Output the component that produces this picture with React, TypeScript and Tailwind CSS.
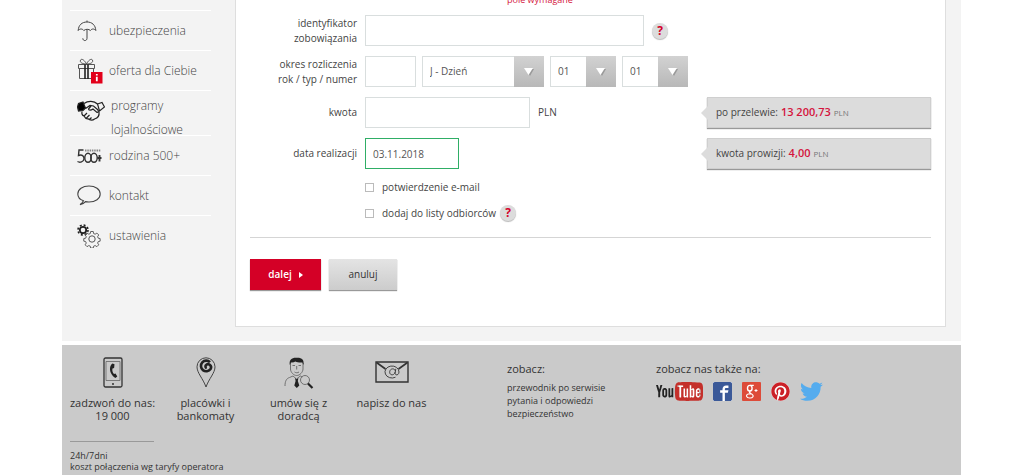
import React from "react";
import type { ReactNode } from "react";
import { FaPinterest, FaTwitter } from "react-icons/fa";
import { ImFacebook2, ImYoutube2 } from "react-icons/im";

const UmbrellaIcon = () => (
  <svg width="20" height="22" viewBox="0 0 20 22" fill="none" stroke="#444" strokeWidth="1">
    <path d="M1.2 10.5C1.5 5 5 2 10 2s8.500 3 8.800 8.500c-1.500-2-4-2-5.400 0-1.500-1.600-4.900-1.600-6.600 0-1.500-2-4.100-2-5.600 0z" />
    <path d="M10 .5V2M10 9.500v8.800c0 3-4.200 3-4.200 0" />
  </svg>
);

const GiftIcon = () => (
  <svg width="26" height="26" viewBox="0 0 26 26" fill="none" stroke="#555">
    <path d="M1.500 6.500h16v4h-16zM2.500 10.500h14v10h-14z" />
    <path d="M8 6v15M11 6v15" stroke="#222" strokeWidth="1.600" />
    <path d="M9.500 6C7 1 3.500 0 3.300 3c0 2 3 3 6.200 3C12 1 15.500 0 15.700 3c0 2-3 3-6.200 3z" />
    <path d="M14 14h11.500v11.500H14z" fill="#e2001a" stroke="none" />
    <path d="M19.800 16v1.600M19.800 18.800v4.400" stroke="#fff" strokeWidth="1.800" />
  </svg>
);

const HandsIcon = () => (
  <svg width="28" height="22" viewBox="0 0 28 22" fill="none" stroke="#222" strokeWidth="1.200">
    <path d="M.5 7 1.500 3.500 6 2l2.500 6L6 10.500l-4.500.5z" fill="#000" />
    <path d="m20.500 4 4.500-1.500L27.500 7 22.500 11z" />
    <path d="M7 3.500C11 .5 17 .5 20.500 4M8.500 8.500 13 5.500l3.500.5 4 3.500c1.500 1.500 1 3-.5 3l-4-3.500c-2 1.500-4.500 1.500-4.500 0L14 6" />
    <path d="M5 11.500c-.5 2.500.5 4 2 4.500 1 2 2.500 3 4 2.800 2 1.700 5 1.500 6.500.2 3-.8 5-3.500 4.500-7M7 16l3-3M9.500 18l3-3M12.500 19.500l2-2" />
  </svg>
);

const FamilyIcon = () => (
  <svg width="25" height="16" viewBox="0 0 25 16" fill="none" stroke="#333" strokeWidth="1.400">
    <path d="M6.500 2H2l-.5 5.500C5 6 7.300 8 7 11c-.5 3-4 4-6.500 2.500" />
    <ellipse cx="11" cy="9.800" rx="3.200" ry="4.500" />
    <ellipse cx="17" cy="9.800" rx="3.200" ry="4.500" />
    <path d="M20.500 10h4M22.500 7v6.500" strokeWidth="1.900" />
    <path d="M8 2.500h16" stroke="#888" strokeWidth="2" strokeDasharray="1.500 .8" />
  </svg>
);

const BubbleIcon = () => (
  <svg width="24" height="21" viewBox="0 0 24 21" fill="none" stroke="#444" strokeWidth="1.100">
    <path d="M6.500 15.800C2.800 14.600.8 12 .8 9c0-4.600 4.700-8 11.200-8s11.200 3.400 11.200 8-4.700 8-11.200 8c-1.200 0-2.400-.1-3.500-.4-1.300 1.600-3 2.600-5.500 3 1.700-1 2.700-2.200 3.500-3.800z" />
  </svg>
);

const GearsIcon = () => (
  <svg width="24" height="24" viewBox="0 0 24 24" fill="none" stroke="#555">
    <circle cx="6" cy="6" r="3.200" stroke="#222" strokeWidth="1.800" />
    <circle cx="6" cy="6" r="5" stroke="#222" strokeWidth="1.600" strokeDasharray="2 1.930" />
    <circle cx="15" cy="15" r="3.200" />
    <path d="m13.600 7 2.800 0 .4 2.200 1.600.7 1.900-1.200 2 2-1.200 1.900.7 1.600 2 .4v2.800l-2 .4-.7 1.600 1.200 1.900-2 2-1.900-1.200-1.600.7-.4 2h-2.800l-.4-2-1.600-.7-1.900 1.200-2-2 1.200-1.900-.7-1.600-2-.4v-2.800l2-.4.700-1.600-1.200-1.900 2-2 1.900 1.200 1.600-.7z" transform="translate(1 1) scale(.93)" />
  </svg>
);

const PhoneIcon = () => (
  <svg width="20" height="31" viewBox="0 0 20 31" fill="none" stroke="#333">
    <rect x="1" y="1" width="18" height="29" rx="1.500" strokeWidth="1.300" />
    <path d="M3 4.500h14v19H3z" stroke="#666" strokeWidth=".8" />
    <path d="M9.500 6.500c-3.500 2-4 10 2.800 14.500l2-1.500-1.800-3-1.500.6c-1.600-1.800-2-3.800-1.500-5.600l1.600-.5.400-3.700z" fill="#222" stroke="none" />
    <circle cx="10" cy="27" r=".9" fill="#222" stroke="none" />
  </svg>
);

const PinIcon = () => (
  <svg width="20" height="31" viewBox="0 0 20 31" fill="none" stroke="#444">
    <path d="M10 30C7 21.500 1 16 1 9.800a9 9 0 0 1 18 0C19 16 13 21.500 10 30z" />
    <path d="M14 5.200A5.300 5.300 0 1 0 14.600 12C16.500 8.500 12 5.500 9.800 8.200c-.8 1.300-.2 2.500 1 2.800" stroke="#222" strokeWidth="2.600" />
  </svg>
);

const AdvisorIcon = () => (
  <svg width="30" height="32" viewBox="0 0 30 32" fill="none" stroke="#666" strokeWidth=".9">
    <path d="M6.500 6v6c0 3 3 6.500 6.200 6.500S19 15 19 12V6" />
    <path d="M5.800 8C4.800 3 8 .5 12.500.8 18 .5 20.300 3 19.500 8l-1.200-2.500c-3 .3-5-.2-7-1-1 .8-2.500 1.200-4.300 1z" fill="#222" stroke="none" />
    <path d="M8.500 8.500H11M14.500 8.500H17M12.700 9v3.500M10.500 15c1.500 1 3 1 4.500 0M1 29c0-5 1.500-7.500 4.500-8.500L9 19l3.500 3 3.800-3 2 1" />
    <path d="m11 21 1.600 1.200L14.400 21l-.6 3 1.500 4.500-2.500 2.500-2.500-2.500L11.600 24z" fill="#222" stroke="none" />
    <circle cx="21" cy="23" r="4.500" />
    <path d="m24 26.500 4.500 4.500" stroke="#222" strokeWidth="2.200" />
  </svg>
);

const MailIcon = () => (
  <svg width="34" height="22" viewBox="0 0 34 22" fill="none" stroke="#333" strokeWidth="1.400">
    <path d="M1 1h32v20H1z" />
    <path d="m1.500 1.500 9 6.500M32.500 1.500l-9 6.500" strokeWidth="1.700" />
    <path d="M20.500 16.200A7 6 0 1 1 24 11c-.2 3.800-4.400 3.800-3.800.5l.6-3.700M20.200 11c-1 4-5.800 3.600-5.500-.2.400-3.600 5-4 5.700-.6" strokeWidth=".9" />
  </svg>
);

const GooglePlusIcon = () => (
  <svg width="19" height="19" viewBox="0 0 19 19" fill="none" stroke="#fff">
    <rect width="19" height="19" rx="1" fill="#dd4b39" stroke="none" />
    <ellipse cx="7.800" cy="6.200" rx="2.300" ry="2.800" strokeWidth="1.400" />
    <path d="M8 3.400h3.800M8.500 9c-2 1-1 1.700.4 2.500 4.300 2.300 1.600 4.700-1.300 4.500-3.200-.1-4.300-3-1.300-4 .9-.3 1.900-.3 2.700-.3" strokeWidth="1.200" />
    <path d="M12.500 8.500h3M14 7v3" strokeWidth="1" />
  </svg>
);

const MenuItem = ({ icon, children, tall, last }: { icon: ReactNode; children: ReactNode; tall?: boolean; last?: boolean }) => (
  <li className={`${tall ? "h-[45px] pt-[3px]" : "h-10"} ${last ? "" : "border-b border-white"}`}>
    <a href="#" className={`flex pl-[7px] ${tall ? "gap-1.5" : "h-full items-center gap-1"}`}>
      <span className={`flex w-7 shrink-0 ${tall ? "pt-1.5" : "items-center"}`}>{icon}</span>
      <span className={tall ? "leading-6" : "leading-4"}>{children}</span>
    </a>
  </li>
);

const Help = () => (
  <button
    type="button"
    aria-label="pomoc"
    className="flex size-4 shrink-0 items-center justify-center rounded-full bg-[#dcdcdc] text-xs font-bold leading-4 text-[#d4002a] shadow-[0_1px_1px_#bbb]"
  >
    ?
  </button>
);

const box = "h-[31px] border border-[#d9dede] bg-white px-[7px] outline-none";

const Row = ({ id, label, children }: { id: string; label: ReactNode; children: ReactNode }) => (
  <div className="flex min-h-[31px] items-center gap-2">
    <label htmlFor={id} className="w-[107px] shrink-0 text-right leading-[15px]">
      {label}
    </label>
    {children}
  </div>
);

const Select = ({ id, label, value, size }: { id: string; label: string; value: string; size: string }) => (
  <div className={`relative h-[31px] ${size}`}>
    <select id={id} aria-label={label} className={`${box} w-full appearance-none text-[#555]`}>
      <option>{value}</option>
    </select>
    <span className="pointer-events-none absolute inset-y-0 right-0 flex w-[30px] items-center justify-center bg-linear-to-b from-[#d2d2d2] to-[#b8b8b8]">
      <svg width="10" height="8" viewBox="0 0 10 8">
        <path d="M2 1h8L6 8z" fill="#999" />
        <path d="M0 0h9L4.500 7z" fill="#fff" />
      </svg>
    </span>
  </div>
);

const Info = ({ label, value }: { label: string; value: string }) => (
  <div className="relative flex h-[31px] items-center gap-[3px] border border-[#cfcfcf] bg-[#dcdcdc] px-2 shadow-[0_1px_1px_#999]">
    <svg className="absolute top-2 -left-[7px]" width="7" height="14" viewBox="0 0 7 14">
      <path d="M7 0v14L0 7z" fill="#dcdcdc" />
    </svg>
    <span>{label}</span>
    <span className="text-[11px] font-semibold text-[#d4143c]">{value}</span>
    <span className="text-[8px] text-[#777]">PLN</span>
  </div>
);

const Contact = ({ icon, children }: { icon: ReactNode; children: ReactNode }) => (
  <a href="#" className="flex w-[93px] flex-col items-center text-center leading-[13px]">
    <span className="flex h-[39px] items-start">{icon}</span>
    <span>{children}</span>
  </a>
);

export default function App() {
  return (
    <div className="min-h-screen bg-white font-['Open_Sans',sans-serif] text-[11px] text-[#444]">
      <div className="mx-auto flex min-h-screen w-full max-w-[899px] flex-col">
        <div className="flex bg-[#f3f3f3] pb-[14px]">
          <nav className="w-[173px] shrink-0 pl-2">
            <ul className="w-[141px] text-xs font-light">
              <li className="h-[11px] border-b border-white" />
              <MenuItem icon={<UmbrellaIcon />}>ubezpieczenia</MenuItem>
              <MenuItem icon={<GiftIcon />}>oferta dla Ciebie</MenuItem>
              <MenuItem icon={<HandsIcon />} tall>
                programy lojalnościowe
              </MenuItem>
              <MenuItem icon={<FamilyIcon />}>rodzina 500+</MenuItem>
              <MenuItem icon={<BubbleIcon />}>kontakt</MenuItem>
              <MenuItem icon={<GearsIcon />} last>
                ustawienia
              </MenuItem>
            </ul>
          </nav>

          <main className="mr-[15px] flex-1 border border-t-0 border-[#dedede] bg-white px-[14px] pb-9">
            <form className="flex flex-col text-[10px]">
              <div className="flex h-[15px] items-start overflow-hidden pl-[257px]">
                <p className="-mt-2 text-[9px] leading-4 text-[#d4143c]">pole wymagane</p>
              </div>
              <div className="flex justify-between">
                <div className="flex flex-col gap-[10px]">
                  <Row id="ident" label={<>identyfikator<br />zobowiązania</>}>
                    <input id="ident" className={`${box} w-[279px]`} />
                    <Help />
                  </Row>
                  <Row id="rok" label={<>okres rozliczenia<br />rok / typ / numer</>}>
                    <div className="flex gap-1.5">
                      <input id="rok" className={`${box} w-[51px]`} />
                      <Select id="typ" label="typ" value="J - Dzień" size="w-[122px]" />
                      <Select id="n1" label="numer" value="01" size="w-[66px]" />
                      <Select id="n2" label="numer" value="01" size="w-[66px]" />
                    </div>
                  </Row>
                  <Row id="kwota" label="kwota">
                    <input id="kwota" className={`${box} w-[165px]`} />
                    <span>PLN</span>
                  </Row>
                  <Row id="data" label="data realizacji">
                    <input
                      id="data"
                      defaultValue="03.11.2018"
                      className="h-[31px] w-[94px] border border-[#2fae66] px-[7px] text-[#555] outline-none"
                    />
                  </Row>
                </div>
                <div className="mt-[82px] flex w-[224px] flex-col gap-[10px]">
                  <Info label="po przelewie:" value="13 200,73" />
                  <Info label="kwota prowizji:" value="4,00" />
                </div>
              </div>
              <div className="mt-[10px] flex flex-col gap-[10px] border-b border-[#d5d5d5] pb-4 pl-[115px]">
                <label className="flex h-4 items-center gap-2">
                  <input type="checkbox" className="size-[9px] appearance-none border border-[#bbb] bg-white" />
                  potwierdzenie e-mail
                </label>
                <div className="flex h-4 items-center gap-1">
                  <label className="flex items-center gap-2">
                    <input type="checkbox" className="size-[9px] appearance-none border border-[#bbb] bg-white" />
                    dodaj do listy odbiorców
                  </label>
                  <Help />
                </div>
              </div>
              <div className="mt-[21px] flex gap-2">
                <button
                  type="button"
                  className="flex h-[31px] w-[71px] items-center justify-center gap-[7px] bg-[#d40026] font-semibold text-white shadow-[0_1px_1px_#999]"
                >
                  dalej
                  <svg width="4" height="6" viewBox="0 0 4 6">
                    <path d="M0 0l4 3-4 3z" fill="#fff" />
                  </svg>
                </button>
                <button
                  type="button"
                  className="h-[31px] w-[68px] bg-linear-to-b from-[#e4e4e4] to-[#cccccc] text-[#333] shadow-[0_1px_1px_#999]"
                >
                  anuluj
                </button>
              </div>
            </form>
          </main>
        </div>

        <footer className="mt-1 flex-1 bg-[#cacaca] px-1 pt-3 text-[#333]">
          <div className="flex">
            <div className="flex h-[84px]">
              <Contact icon={<PhoneIcon />}>zadzwoń do nas: 19 000</Contact>
              <Contact icon={<PinIcon />}>placówki i bankomaty</Contact>
              <Contact icon={<AdvisorIcon />}>umów się z doradcą</Contact>
              <Contact icon={<span className="pt-1"><MailIcon /></span>}>napisz do nas</Contact>
            </div>
            <div className="ml-[69px] w-[149px] pt-1">
              <h2 className="leading-4">zobacz:</h2>
              <ul className="mt-1 text-[9px] leading-[13px]">
                <li><a href="#">przewodnik po serwisie</a></li>
                <li><a href="#">pytania i odpowiedzi</a></li>
                <li><a href="#">bezpieczeństwo</a></li>
              </ul>
            </div>
            <div className="pt-1">
              <h2 className="leading-4">zobacz nas także na:</h2>
              <div className="mt-1 flex h-5 items-center gap-[10px]">
                <a href="#" aria-label="YouTube" className="relative flex h-5 items-center">
                  <svg width="0" height="0" className="absolute">
                    <linearGradient id="yt" gradientUnits="userSpaceOnUse" x1="0" y1="0" x2="40" y2="0">
                      <stop offset=".41" stopColor="#222" />
                      <stop offset=".41" stopColor="#c4302b" />
                    </linearGradient>
                  </svg>
                  <span className="absolute inset-y-[3px] right-1 w-5 bg-white" />
                  <ImYoutube2 className="relative h-auto w-[47px] [&_path]:fill-[url(#yt)]" />
                </a>
                <a href="#" aria-label="Facebook" className="bg-white text-[19px] text-[#3b5998]"><ImFacebook2 /></a>
                <a href="#" aria-label="Google+"><GooglePlusIcon /></a>
                <a href="#" aria-label="Pinterest" className="rounded-full bg-white text-[19px] text-[#cb2027]"><FaPinterest /></a>
                <a href="#" aria-label="Twitter" className="text-[23px] text-[#55acee]"><FaTwitter /></a>
              </div>
            </div>
          </div>
          <div className="ml-1 w-[84px] border-t border-[#999]" />
          <p className="mt-2 ml-1 text-[9px] leading-[11px]">
            24h/7dni
            <br />
            koszt połączenia wg taryfy operatora
          </p>
        </footer>
      </div>
    </div>
  );
}
